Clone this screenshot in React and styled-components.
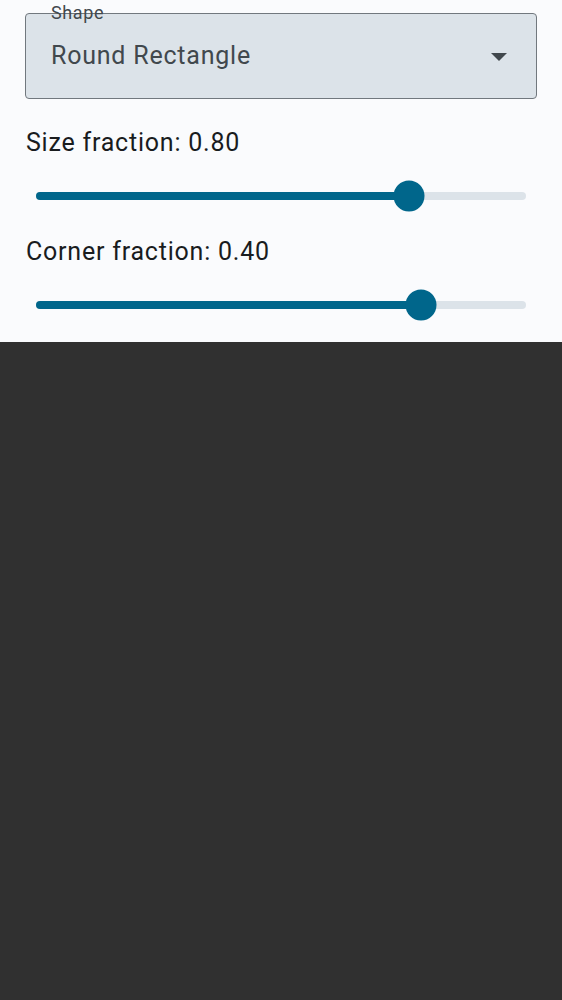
import React from "react";
import styled, { createGlobalStyle } from "styled-components";

const GlobalStyle = createGlobalStyle`
  html, body {
    margin: 0;
    padding: 0;
    background: #303030;
    font-family: Roboto, "Noto Sans", sans-serif;
  }
`;

const Page = styled.div`
  width: 562px;
  height: 1000px;
  background: #303030;
`;

const Panel = styled.div`
  background: #fafbfd;
  padding: 13px 25px 33px 25px;
  display: flex;
  flex-direction: column;
  gap: 35px;
`;

const SelectBox = styled.div`
  position: relative;
  height: 84px;
  border: 1px solid #71787e;
  border-radius: 4px;
  background: #dce3e9;
  display: flex;
  align-items: center;
  justify-content: space-between;
  padding: 0 29px 0 25px;
  margin-bottom: -8px;
`;

const FloatingLabel = styled.span`
  position: absolute;
  top: -12px;
  left: 25px;
  font-size: 18px;
  line-height: 22px;
  letter-spacing: 0.6px;
  color: #41484d;
`;

const SelectValue = styled.span`
  font-size: 25px;
  line-height: 34px;
  letter-spacing: 0.78px;
  color: #41484d;
`;

const Caret = styled.svg`
  width: 16px;
  height: 8px;
  display: block;
  margin-top: 2px;
`;

const Section = styled.div`
  display: flex;
  flex-direction: column;
`;

const FieldLabel = styled.div`
  font-size: 25px;
  line-height: 34px;
  letter-spacing: 0.78px;
  color: #191c1e;
  padding-left: 1px;
`;

const SliderRow = styled.div`
  padding-top: 32px;
  margin: 0 11px;
`;

const Track = styled.div`
  position: relative;
  height: 8px;
  border-radius: 4px;
  background: #dce3e9;
`;

const ActiveTrack = styled.div`
  position: absolute;
  left: 0;
  top: 0;
  bottom: 0;
  border-radius: 4px;
  background: #00668b;
`;

const Thumb = styled.div`
  position: absolute;
  top: 50%;
  width: 31px;
  height: 31px;
  border-radius: 50%;
  background: #00668b;
  transform: translate(-50%, -50%);
`;

const sliders = [
  { label: "Size fraction", value: 0.8, pos: 0.762 },
  { label: "Corner fraction", value: 0.4, pos: 0.785 },
];

function Slider({ pos }) {
  const pct = `${pos * 100}%`;
  return (
    <SliderRow>
      <Track>
        <ActiveTrack style={{ width: pct }} />
        <Thumb style={{ left: pct }} />
      </Track>
    </SliderRow>
  );
}

export default function App() {
  return (
    <Page>
      <GlobalStyle />
      <Panel>
        <SelectBox>
          <FloatingLabel>Shape</FloatingLabel>
          <SelectValue>Round Rectangle</SelectValue>
          <Caret viewBox="0 0 16 8">
            <polygon points="0,0 16,0 8,8" fill="#41484d" />
          </Caret>
        </SelectBox>
        {sliders.map((s) => (
          <Section key={s.label}>
            <FieldLabel>
              {s.label}: {s.value.toFixed(2)}
            </FieldLabel>
            <Slider pos={s.pos} />
          </Section>
        ))}
      </Panel>
    </Page>
  );
}
